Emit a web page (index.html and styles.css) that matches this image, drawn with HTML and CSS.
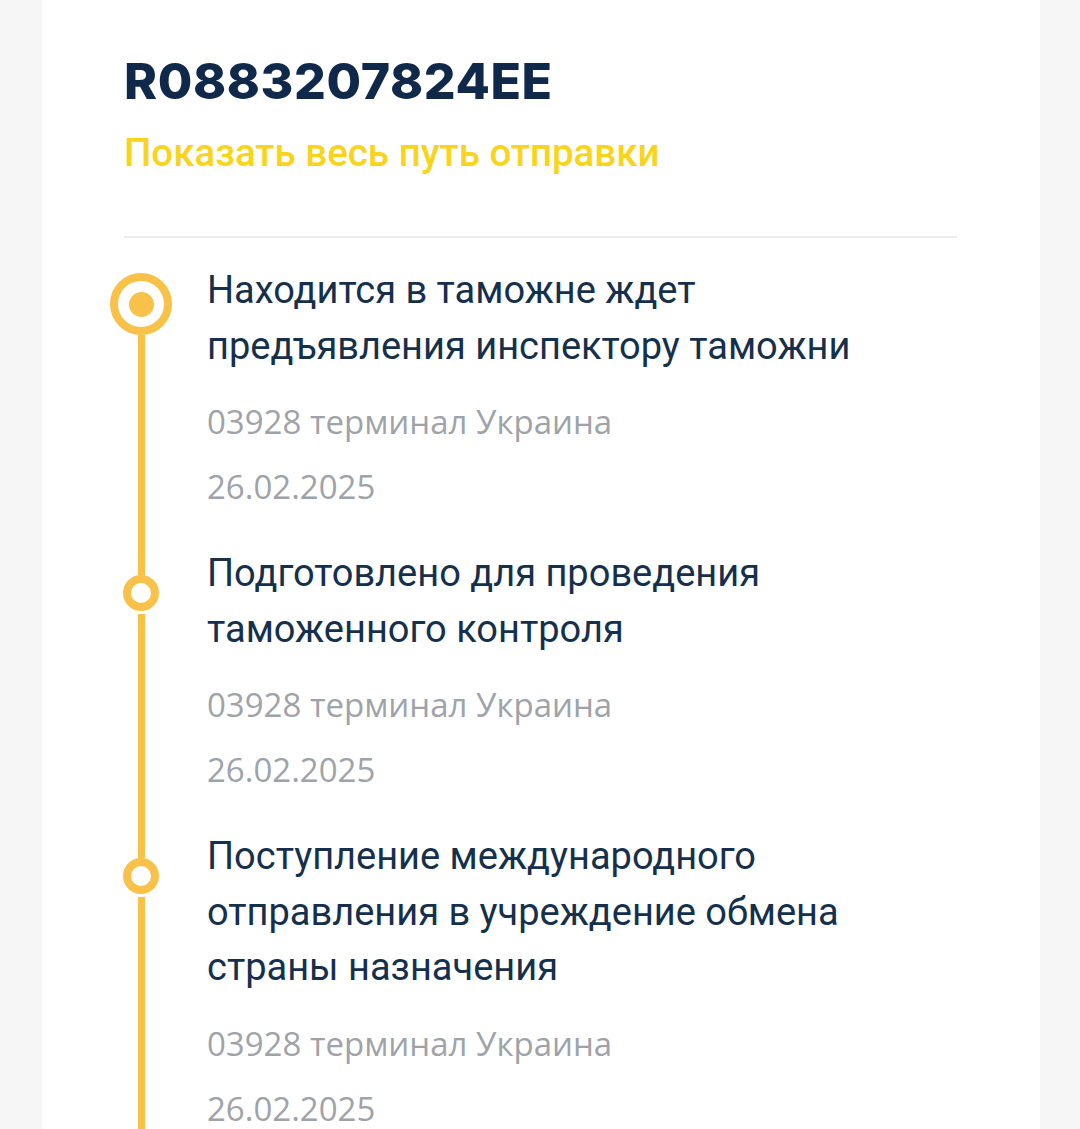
FILE: index.html
```html
<!DOCTYPE html>
<html lang="ru">
<head>
<meta charset="utf-8">
<title>R0883207824EE</title>
<link rel="stylesheet" href="styles.css">
</head>
<body>
<main class="card">
  <h1 class="track">R0883207824EE</h1>
  <a class="route-link" href="#">Показать весь путь отправки</a>
  <hr class="divider">
  <ol class="timeline">
    <li class="event event--current">
      <div class="marker">
        <span class="seg seg--top"></span>
        <span class="dot"></span>
        <span class="seg seg--rest"></span>
      </div>
      <div class="info">
        <p class="status">Находится в таможне ждет предъявления инспектору таможни</p>
        <p class="meta">03928 терминал Украина</p>
        <p class="meta">26.02.2025</p>
      </div>
    </li>
    <li class="event">
      <div class="marker">
        <span class="seg seg--top"></span>
        <span class="dot"></span>
        <span class="seg seg--rest"></span>
      </div>
      <div class="info">
        <p class="status">Подготовлено для проведения таможенного контроля</p>
        <p class="meta">03928 терминал Украина</p>
        <p class="meta">26.02.2025</p>
      </div>
    </li>
    <li class="event">
      <div class="marker">
        <span class="seg seg--top"></span>
        <span class="dot"></span>
        <span class="seg seg--rest"></span>
      </div>
      <div class="info">
        <p class="status">Поступление международного отправления в учреждение обмена страны назначения</p>
        <p class="meta">03928 терминал Украина</p>
        <p class="meta">26.02.2025</p>
      </div>
    </li>
  </ol>
</main>
</body>
</html>
```
FILE: styles.css
```css
* { box-sizing: border-box; }
html, body { margin: 0; padding: 0; }
body {
  background: #f6f6f6;
  font-family: Roboto, "Noto Sans", sans-serif;
  overflow: hidden;
  height: 1129px;
}
.card {
  background: #ffffff;
  margin: 0 40px 0 42px;
  min-height: 1400px;
  padding: 51px 83px 0 82px;
}
.track {
  margin: 0;
  font-family: Inter, Roboto, sans-serif;
  font-weight: 800;
  font-size: 50px;
  line-height: 60px;
  color: #10294a;
  letter-spacing: 0.6px;
}
.route-link {
  display: block;
  margin-top: 17px;
  font-family: Roboto, sans-serif;
  font-weight: 500;
  font-size: 38.5px;
  line-height: 50px;
  color: #f8d41c;
  text-decoration: none;
}
.divider {
  margin: 58px 0 0 0;
  border: 0;
  height: 2px;
  background: #ebebeb;
}
.timeline {
  list-style: none;
  margin: 0 0 0 -16px;
  padding: 25px 0 0 0;
}
.event {
  display: grid;
  grid-template-columns: 66px 1fr;
  column-gap: 33px;
}
.marker {
  display: flex;
  flex-direction: column;
  align-items: center;
}
.seg {
  width: 7px;
  background: #f8c14a;
}
.seg--top { height: 29px; }
.seg--rest { flex: 1; margin-top: 3px; }
.dot {
  width: 36px;
  height: 36px;
  border-radius: 50%;
  border: 8px solid #f8c14a;
  background: #ffffff;
  flex: none;
}
.event--current .seg--top { height: 10px; background: transparent; }
.event--current .seg--rest { margin-top: 0; }
.event--current .dot {
  width: 62px;
  height: 62px;
  border-width: 8px;
  display: flex;
  align-items: center;
  justify-content: center;
}
.event--current .dot::after {
  content: "";
  width: 25px;
  height: 25px;
  border-radius: 50%;
  background: #f8c14a;
}
.info {
  padding: 0 60px 27px 0;
}
.status {
  margin: 0;
  font-family: Roboto, sans-serif;
  font-size: 38px;
  line-height: 55.5px;
  color: #15304d;
}
.meta {
  margin: 0;
  font-family: "Open Sans", "Noto Sans", sans-serif;
  font-size: 33px;
  line-height: 65px;
  color: #9ea3a9;
}
.status + .meta { margin-top: 15px; }
```
